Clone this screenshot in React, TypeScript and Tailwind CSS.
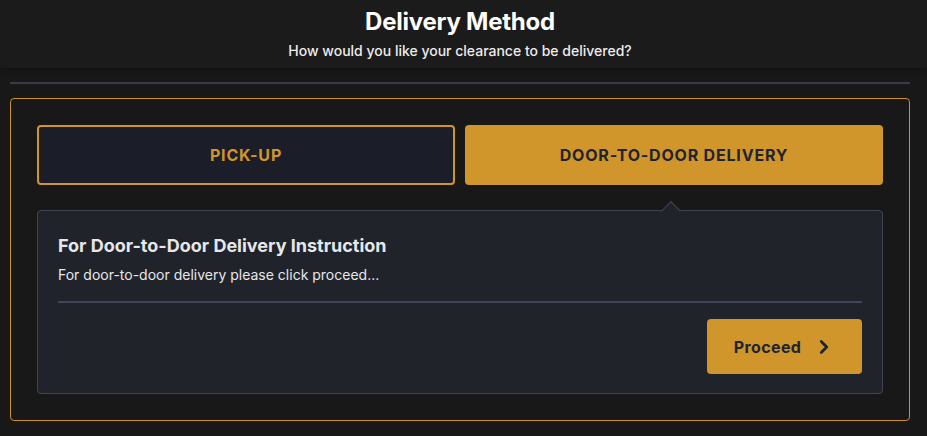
import React from 'react';
import { ChevronRight } from 'lucide-react';

const App: React.FC = () => {
  return (
    <div className="min-h-screen bg-[#181818] font-['Inter',sans-serif] text-white">
      {/* Header */}
      <div className="h-[68px] bg-[#1b1b1b] shadow-[0_2px_6px_rgba(0,0,0,0.25)]">
        <div className="w-[920px] pt-[7px] text-center">
          <h1 className="text-[24px] font-bold leading-[30px] tracking-[-0.01em] text-white">Delivery Method</h1>
          <p className="mt-[6px] text-[14px] font-medium leading-[16px] text-[#ececec]">
            How would you like your clearance to be delivered?
          </p>
        </div>
      </div>

      <div className="w-[920px] pl-[10px] pr-[10px]">
        <div className="mt-[14px] h-[2px] bg-[#383c46]" />

        <div className="mt-[14px] rounded-[4px] border border-[#c9922e] p-[26px]">
          {/* Options */}
          <div className="grid grid-cols-2 gap-[10px]">
            <button className="flex h-[60px] items-center justify-center rounded-[4px] border-2 border-[#d0952b] bg-[#1b1e29] text-[16px] font-bold tracking-wider text-[#d0952b]">
              PICK-UP
            </button>
            <button className="flex h-[60px] items-center justify-center rounded-[4px] bg-[#d0952b] text-[16px] font-bold tracking-wider text-[#1f2430]">
              DOOR-TO-DOOR DELIVERY
            </button>
          </div>

          {/* Instruction panel */}
          <div className="relative mt-[25px] rounded-[4px] border border-[#3f4452] bg-[#202329] px-[20px] pt-[23px] pb-[19px]">
            <div className="absolute left-3/4 top-[-7px] h-[14px] w-[14px] -translate-x-1/2 rotate-45 border-l border-t border-[#3f4452] bg-[#202329]" />
            <h2 className="text-[18px] font-bold leading-[24px] text-[#e5e7eb]">For Door-to-Door Delivery Instruction</h2>
            <p className="mt-[8px] text-[14px] leading-[18px] text-[#e5e7eb]">For door-to-door delivery please click proceed...</p>
            <div className="mt-[17px] h-[2px] bg-[#3f4658]" />
            <div className="mt-[16px] flex justify-end">
              <button className="flex h-[55px] w-[155px] items-center justify-center gap-[12px] rounded-[4px] bg-[#d0952b] text-[16px] font-bold tracking-wide text-[#1f2430]">
                Proceed
                <ChevronRight size={22} strokeWidth={3} />
              </button>
            </div>
          </div>
        </div>
      </div>
    </div>
  );
};

export default App;
